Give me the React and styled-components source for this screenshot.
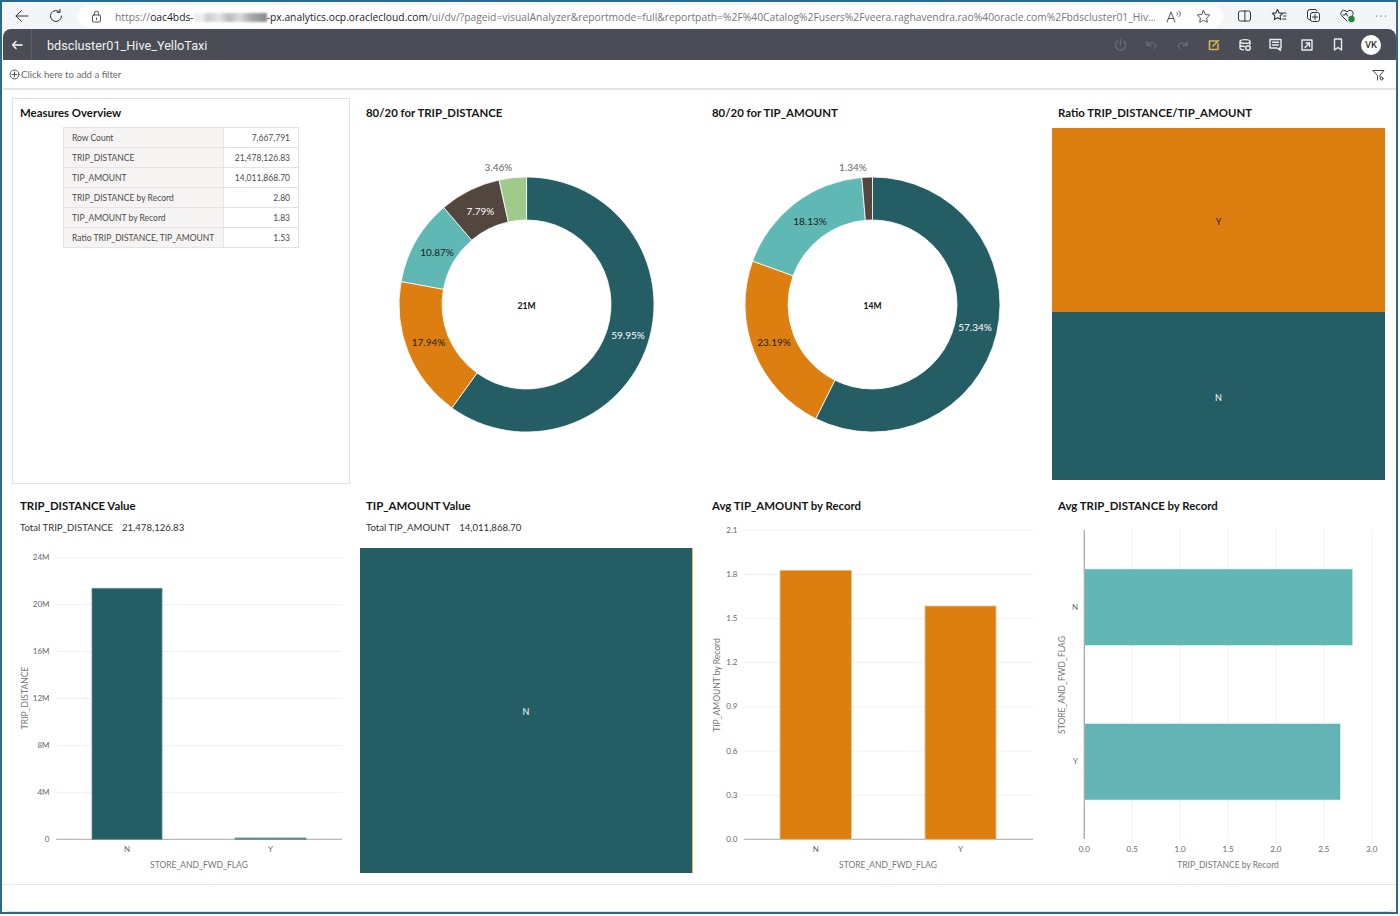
import React from "react";
import styled, { createGlobalStyle } from "styled-components";

const Global = createGlobalStyle`
  html, body { margin: 0; padding: 0; background: #fff; }
  body { font-family: "Lato", "Noto Sans", sans-serif; }
`;

const TEAL = "#255d64";
const ORANGE = "#dc7e10";
const AQUA = "#5fb8b3";
const BROWN = "#53463e";
const GREEN = "#a0c98c";

const Frame = styled.div`
  box-sizing: border-box;
  width: 1398px;
  height: 914px;
  border: 2px solid #2a6a8c;
  background: #fff;
  display: flex;
  flex-direction: column;
  overflow: hidden;
`;

const BrowserBar = styled.div`
  height: 27px;
  flex: none;
  background: #f3f5f8;
  display: flex;
  align-items: center;
`;
const NavSlot = styled.div`
  width: ${(p) => p.$w}px;
  flex: none;
  display: flex;
  justify-content: center;
  align-items: center;
`;
const UrlPill = styled.div`
  width: 1145px;
  height: 23px;
  margin-top: 2px;
  margin-left: 8px;
  background: #fff;
  border-radius: 12px;
  display: flex;
  align-items: center;
  flex: none;
  color: #777;
  font-family: "Open Sans", sans-serif;
  font-size: 10.3px;
  white-space: nowrap;
`;
const UrlLock = styled.div`
  width: 37px;
  flex: none;
  display: flex;
  justify-content: center;
`;
const UrlText = styled.div`
  width: 1040px;
  flex: none;
  overflow: hidden;
`;
const Host = styled.span`
  color: #222;
`;
const Blurred = styled.span`
  display: inline-block;
  width: 73px;
  height: 9px;
  vertical-align: -1px;
  background: linear-gradient(90deg, #eee 0 12%, #ccc 18%, #e6e6e6 34%, #bbb 48%, #ddd 62%, #aaa 78%, #888 100%);
  filter: blur(1px);
`;
const PillIcons = styled.div`
  display: flex;
  align-items: center;
  gap: 14px;
  margin-left: 11px;
`;
const BrowserTools = styled.div`
  display: flex;
  align-items: center;
  margin-left: 4px;
`;

const AppHeader = styled.div`
  height: 31px;
  flex: none;
  background: #4a4d55;
  border-radius: 8px 8px 0 0;
  margin-left: 1px;
  display: flex;
  align-items: center;
  color: #fff;
`;
const BackCell = styled.div`
  width: 28px;
  height: 100%;
  flex: none;
  border-right: 1px solid #5d6067;
  display: flex;
  align-items: center;
  justify-content: center;
`;
const DocTitle = styled.div`
  font-family: "Roboto", sans-serif;
  font-size: 12.7px;
  color: #f1f1f1;
  margin-left: 15px;
  padding-top: 1px;
  flex: 1;
`;
const HeaderIcons = styled.div`
  display: flex;
  align-items: center;
  margin-right: 15px;
`;
const HeaderIcon = styled.div`
  width: 31px;
  display: flex;
  justify-content: center;
  align-items: center;
`;
const Avatar = styled.div`
  width: 20px;
  height: 20px;
  border-radius: 50%;
  background: #fff;
  color: #33363c;
  font-family: "Roboto", sans-serif;
  font-size: 9.5px;
  font-weight: 500;
  display: flex;
  align-items: center;
  justify-content: center;
  margin-left: 8px;
`;

const FilterBar = styled.div`
  box-sizing: border-box;
  height: 30px;
  flex: none;
  margin-left: 1px;
  border-bottom: 2px solid #e4e4e4;
  display: flex;
  align-items: center;
  padding: 1px 11px 0 6px;
  font-size: 9.6px;
  color: #6a6a6a;
`;
const FilterText = styled.span`
  flex: 1;
  margin-left: 1px;
`;

const Canvas = styled.div`
  display: grid;
  grid-template-columns: repeat(4, 346px);
  grid-template-rows: repeat(2, 393px);
  padding: 2px 0 0 6px;
  flex: none;
`;
const Cell = styled.section`
  box-sizing: border-box;
  padding: 14px 7px 5px 6px;
  display: flex;
  flex-direction: column;
`;
const FramedCell = styled.section`
  box-sizing: border-box;
  margin: 6px 4px 1px 4px;
  border: 1px solid #e2e2e2;
  padding: 7px 0 0 1px;
  display: flex;
  flex-direction: column;
`;
const Title = styled.h2`
  margin: 0 0 8px;
  padding-left: 6px;
  font-size: 11.4px;
  line-height: 14px;
  font-weight: 700;
  color: #161616;
`;
const Sub = styled.div`
  padding-left: 6px;
  margin-bottom: 13px;
  font-size: 9.6px;
  line-height: 14px;
  color: #333;
  display: flex;
  gap: 9px;
`;
const Table = styled.table`
  border-collapse: collapse;
  width: 236px;
  margin: -1px 0 0 49px;
  table-layout: fixed;
  font-size: 8.5px;
  color: #4c4c4c;
  & td {
    height: 20px;
    padding: 0;
    box-sizing: border-box;
    border: 1px solid #e4e3e1;
  }
`;
const Label = styled.td`
  width: 160px;
  background: #f5f4f2;
  padding-left: 8px !important;
`;
const Val = styled.td`
  text-align: right;
  padding-right: 8px !important;
`;

const Tree = styled.div`
  flex: 1;
  display: flex;
  flex-direction: ${(p) => (p.$row ? "row" : "column")};
  width: 333px;
`;
const Tile = styled.div`
  box-sizing: border-box;
  flex: ${(p) => (p.$size ? `0 0 ${p.$size}px` : "1")};
  background: ${(p) => p.$bg};
  color: ${(p) => p.$fg || "#fff"};
  font-size: 9px;
  padding-top: ${(p) => (p.$size === 1 ? 0 : 2)}px;
  display: flex;
  align-items: center;
  justify-content: center;
`;
const Footer = styled.div`
  box-sizing: border-box;
  margin-top: 6px;
  flex: 1;
  border-top: 1px solid #e8e8e8;
  border-bottom: 1px solid #dedede;
  border-radius: 0 0 8px 8px;
`;

const ChartSvg = styled.svg`
  display: block;
  flex: none;
`;
const Tick = styled.text`
  font-family: "Lato", sans-serif;
  font-size: 8px;
  fill: #666;
`;
const AxisTitle = styled.text`
  font-family: "Lato", sans-serif;
  font-size: 8.5px;
  fill: #777;
`;
const Pct = styled.text`
  font-family: "Lato", sans-serif;
  font-size: 10px;
  text-anchor: middle;
`;
const Center = styled.text`
  font-family: "Lato", sans-serif;
  font-size: 8.5px;
  font-weight: 700;
  text-anchor: middle;
  fill: #111;
`;

function polar(cx, cy, r, f) {
  const a = f * 2 * Math.PI;
  return [cx + r * Math.sin(a), cy - r * Math.cos(a)];
}
function arc(cx, cy, R, r, a, b) {
  const large = b - a > 0.5 ? 1 : 0;
  const [x1, y1] = polar(cx, cy, R, a);
  const [x2, y2] = polar(cx, cy, R, b);
  const [x3, y3] = polar(cx, cy, r, b);
  const [x4, y4] = polar(cx, cy, r, a);
  return `M${x1} ${y1}A${R} ${R} 0 ${large} 1 ${x2} ${y2}L${x3} ${y3}A${r} ${r} 0 ${large} 0 ${x4} ${y4}Z`;
}

function Donut({ originX, total, slices }) {
  const cx = originX + 166.5;
  const cy = 304.5;
  let acc = 0;
  return (
    <ChartSvg width="333" height="352" viewBox={`${originX} 128 333 352`}>
      {slices.map((s) => {
        const a = acc;
        acc += s.v / 100;
        return <path key={s.label} d={arc(cx, cy, 127.5, 84.5, a, acc)} fill={s.c} stroke="#fff" strokeWidth="0.8" />;
      })}
      {slices.map((s) => (
        <Pct key={s.label} x={s.x} y={s.y + 3.5} fill={s.t}>
          {s.label}
        </Pct>
      ))}
      <Center x={cx} y={cy + 4}>
        {total}
      </Center>
    </ChartSvg>
  );
}

function VBars({ view, x0, x1, top, bottom, ticks, labelX, bars, xTitle, xTitleX, yTitle, yTitleX, yTitleY }) {
  const [vx, vy, w, h] = view;
  const step = (bottom - top) / (ticks.length - 1);
  return (
    <ChartSvg width={w} height={h} viewBox={view.join(" ")}>
      {ticks.map((t, i) => {
        const y = bottom - i * step;
        return (
          <g key={t}>
            <line x1={x0} x2={x1} y1={y} y2={y} stroke={i === 0 ? "#a8a8a8" : "#eef0f2"} strokeWidth="1" />
            <Tick x={labelX} y={y + 2.5} textAnchor="end">
              {t}
            </Tick>
          </g>
        );
      })}
      {bars.map((b) => (
        <g key={b.n}>
          <rect x={b.x} y={b.top} width={b.w} height={bottom - b.top} fill={b.c} stroke={b.s} strokeWidth="0.8" />
          <Tick x={b.x + b.w / 2} y={852} textAnchor="middle">
            {b.n}
          </Tick>
        </g>
      ))}
      <AxisTitle x={xTitleX} y={868} textAnchor="middle">
        {xTitle}
      </AxisTitle>
      <AxisTitle x={yTitleX} y={yTitleY} textAnchor="middle" transform={`rotate(-90 ${yTitleX} ${yTitleY})`}>
        {yTitle}
      </AxisTitle>
    </ChartSvg>
  );
}

function HBars() {
  const xs = ["0.0", "0.5", "1.0", "1.5", "2.0", "2.5", "3.0"];
  return (
    <ChartSvg width="333" height="352" viewBox="1052 521 333 352">
      {xs.map((t, i) => {
        const x = 1084.3 + i * 47.9;
        return (
          <g key={t}>
            <line x1={x} x2={x} y1="530" y2="839" stroke={i === 0 ? "#a8a8a8" : "#eef0f2"} />
            <Tick x={x} y={852} textAnchor="middle">
              {t}
            </Tick>
          </g>
        );
      })}
      <rect x="1084.3" y="569" width="268.4" height="76.3" fill="#62b6b4" stroke="#d8efee" strokeWidth="0.6" />
      <rect x="1084.3" y="723.7" width="256" height="76.3" fill="#65b4b5" stroke="#d8efee" strokeWidth="0.6" />
      <line x1="1084.3" x2="1084.3" y1="530" y2="839" stroke="#a8a8a8" />
      <Tick x="1078" y="610" textAnchor="end">N</Tick>
      <Tick x="1078" y="764" textAnchor="end">Y</Tick>
      <AxisTitle x="1228" y="868" textAnchor="middle">TRIP_DISTANCE by Record</AxisTitle>
      <AxisTitle x="1065" y="685" textAnchor="middle" transform="rotate(-90 1065 685)">STORE_AND_FWD_FLAG</AxisTitle>
    </ChartSvg>
  );
}

const Ic = ({ w = 16, h = 16, children, stroke = "#333", sw = 1 }) => (
  <svg width={w} height={h} viewBox={`0 0 ${w} ${h}`} fill="none" stroke={stroke} strokeWidth={sw} strokeLinecap="round" strokeLinejoin="round">
    {children}
  </svg>
);

const rows = [
  ["Row Count", "7,667,791"],
  ["TRIP_DISTANCE", "21,478,126.83"],
  ["TIP_AMOUNT", "14,011,868.70"],
  ["TRIP_DISTANCE by Record", "2.80"],
  ["TIP_AMOUNT by Record", "1.83"],
  ["Ratio TRIP_DISTANCE, TIP_AMOUNT", "1.53"],
];

const d1 = [
  { v: 59.95, c: TEAL, label: "59.95%", x: 628, y: 335, t: "#fff" },
  { v: 17.94, c: ORANGE, label: "17.94%", x: 428.5, y: 342, t: "#1c1c1c" },
  { v: 10.87, c: AQUA, label: "10.87%", x: 437, y: 252, t: "#1c1c1c" },
  { v: 7.79, c: BROWN, label: "7.79%", x: 480.5, y: 211, t: "#fff" },
  { v: 3.46, c: GREEN, label: "3.46%", x: 498.5, y: 167, t: "#666" },
];
const d2 = [
  { v: 57.34, c: TEAL, label: "57.34%", x: 975, y: 327, t: "#fff" },
  { v: 23.19, c: ORANGE, label: "23.19%", x: 774, y: 342, t: "#1c1c1c" },
  { v: 18.13, c: AQUA, label: "18.13%", x: 810, y: 221, t: "#1c1c1c" },
  { v: 1.34, c: BROWN, label: "1.34%", x: 853, y: 167, t: "#666" },
];

const DIM = "#666970";
const LIGHT = "#eceded";

export default function App() {
  return (
    <>
      <Global />
      <Frame>
        <BrowserBar>
          <NavSlot $w={40}>
            <Ic w={16} h={14}>
              <path d="M14 7H2M7.500 1.500 2 7l5.500 5.500" />
            </Ic>
          </NavSlot>
          <NavSlot $w={28}>
            <Ic w={16} h={16}>
              <path d="M13.500 8a5.500 5.500 0 1 1-1.700-4M12 1.300V4.300H9" />
            </Ic>
          </NavSlot>
          <UrlPill>
            <UrlLock>
              <Ic w={11} h={13} stroke="#555">
                <rect x="1.500" y="5" width="8" height="7" rx="1" />
                <path d="M3.500 5V3.200a2 2 0 0 1 4 0V5M5.500 8v1.500" />
              </Ic>
            </UrlLock>
            <UrlText>
              https://<Host>oac4bds-<Blurred />-px.analytics.ocp.oraclecloud.com</Host>/ui/dv/?pageid=visualAnalyzer&amp;reportmode=full&amp;reportpath=%2F%40Catalog%2Fusers%2Fveera.raghavendra.rao%40oracle.com%2Fbdscluster01_Hiv...
            </UrlText>
            <PillIcons>
              <Ic w={16} h={14} stroke="#555">
                <path d="M1 12 5 2l4 10M2.500 8.500h5M11 2.500c1 .8 1 2 0 2.800M13 1c1.800 1.500 1.800 4 0 5.600" />
              </Ic>
              <Ic w={15} h={15} stroke="#555">
                <path d="m7.500 1.500 1.900 3.900 4.300.6-3.100 3 .7 4.300-3.800-2-3.800 2 .7-4.300-3.100-3 4.300-.6z" />
              </Ic>
            </PillIcons>
          </UrlPill>
          <BrowserTools>
            <NavSlot $w={34}>
              <Ic w={15} h={14}>
                <path d="M7.500 2H3.500a2 2 0 0 0-2 2v6a2 2 0 0 0 2 2h4zM7.500 2h4a2 2 0 0 1 2 2v6a2 2 0 0 1-2 2h-4" />
              </Ic>
            </NavSlot>
            <NavSlot $w={35}>
              <Ic w={16} h={15} sw={1.1}>
                <path d="m6.500 1.500 1.600 3.400 3.600.5-2.600 2.500.6 3.700-3.200-1.800-3.200 1.800.6-3.700L1.300 5.400l3.600-.5zM12 5h3M12.500 8H15M11.500 11H15" />
              </Ic>
            </NavSlot>
            <NavSlot $w={34}>
              <Ic w={15} h={15}>
                <rect x="4.500" y="4.500" width="9" height="9" rx="2" />
                <path d="M9 6.500v5M6.500 9h5M4 11.500H3a2 2 0 0 1-1.500-2V4a2.500 2.500 0 0 1 2.500-2.500h5A2 2 0 0 1 11 3" />
              </Ic>
            </NavSlot>
            <NavSlot $w={34}>
              <Ic w={17} h={15}>
                <path d="M8 13 2.500 7.500a3.200 3.200 0 0 1 4.500-4.500l1 1 1-1a3.200 3.200 0 0 1 4.500 4.500M4 7h2l1-2 1.500 3" />
                <circle cx="12.500" cy="11" r="3.200" fill="#1f8a3b" stroke="none" />
              </Ic>
            </NavSlot>
            <NavSlot $w={33}>
              <Ic w={12} h={4} sw={1.2}>
                <path d="M1.500 2h.01M6 2h.01M10.500 2h.01" />
              </Ic>
            </NavSlot>
          </BrowserTools>
        </BrowserBar>

        <AppHeader>
          <BackCell>
            <Ic w={12} h={10} stroke="#fff" sw={1.4}>
              <path d="M11 5H1.500M5 1.500 1.500 5 5 8.500" />
            </Ic>
          </BackCell>
          <DocTitle>bdscluster01_Hive_YelloTaxi</DocTitle>
          <HeaderIcons>
            <HeaderIcon>
              <Ic w={13} h={14} stroke={DIM} sw={1.5}>
                <path d="M6.500 1.500V7M3.500 3.200a5 5 0 1 0 6 0" />
              </Ic>
            </HeaderIcon>
            <HeaderIcon>
              <Ic w={13} h={11} stroke={DIM} sw={1.5}>
                <path d="M2 2.500v4h4M2 6.500C4 3.500 8 2.500 11 6.500l-1.500 3" />
              </Ic>
            </HeaderIcon>
            <HeaderIcon>
              <Ic w={13} h={11} stroke={DIM} sw={1.5}>
                <path d="M11 2.500v4H7M11 6.500C9 3.500 5 2.500 2 6.500l1.500 3" />
              </Ic>
            </HeaderIcon>
            <HeaderIcon>
              <Ic w={12} h={12} stroke="#d9b152" sw={1.6}>
                <path d="M8.500 2H1.500v8.500H10V5M5 7l5.500-5.500" />
              </Ic>
            </HeaderIcon>
            <HeaderIcon>
              <Ic w={14} h={14} stroke={LIGHT} sw={1.4}>
                <path d="M2 3.500C2 1 12 1 12 3.500S2 6 2 3.500ZM2 3.500V10c0 1 1.500 1.700 3.500 1.900M12 3.500V6.500M2 7.200c1 1 2.500 1.300 4.500 1.300" />
                <circle cx="10" cy="10" r="2.300" />
              </Ic>
            </HeaderIcon>
            <HeaderIcon>
              <Ic w={13} h={14} stroke={LIGHT} sw={1.4}>
                <path d="M1 1.500h11v8.500h-1.500l1 2.500-3.500-2.500H1zM3.500 4.200h6M3.500 7h6" />
              </Ic>
            </HeaderIcon>
            <HeaderIcon>
              <Ic w={12} h={12} stroke={LIGHT} sw={1.4}>
                <path d="M1 1h10v10H1zM4 8.500 8.500 4M5 4h3.500v3.500" />
              </Ic>
            </HeaderIcon>
            <HeaderIcon>
              <Ic w={10} h={13} stroke={LIGHT} sw={1.4}>
                <path d="M1.500 1h7v11L5 9.500 1.500 12z" />
              </Ic>
            </HeaderIcon>
            <Avatar>VK</Avatar>
          </HeaderIcons>
        </AppHeader>

        <FilterBar>
          <Ic w={11} h={11} stroke="#555">
            <circle cx="5.500" cy="5.500" r="4.500" />
            <path d="M5.500 3v5M3 5.500h5" />
          </Ic>
          <FilterText>Click here to add a filter</FilterText>
          <Ic w={13} h={12} stroke="#444">
            <path d="M1 1.500h11L8 6v2M1 1.500 5.500 6.500V11" />
            <circle cx="9.500" cy="9.500" r="1.500" />
          </Ic>
        </FilterBar>

        <Canvas>
          <FramedCell>
            <Title>Measures Overview</Title>
            <Table>
              <tbody>
                {rows.map(([a, b]) => (
                  <tr key={a}>
                    <Label>{a}</Label>
                    <Val>{b}</Val>
                  </tr>
                ))}
              </tbody>
            </Table>
          </FramedCell>
          <Cell>
            <Title>80/20 for TRIP_DISTANCE</Title>
            <Donut originX={360} total="21M" slices={d1} />
          </Cell>
          <Cell>
            <Title>80/20 for TIP_AMOUNT</Title>
            <Donut originX={706} total="14M" slices={d2} />
          </Cell>
          <Cell>
            <Title>Ratio TRIP_DISTANCE/TIP_AMOUNT</Title>
            <Tree>
              <Tile $bg={ORANGE} $fg="#222" $size={184}>Y</Tile>
              <Tile $bg={TEAL}>N</Tile>
            </Tree>
          </Cell>
          <Cell>
            <Title>TRIP_DISTANCE Value</Title>
            <Sub>
              <span>Total TRIP_DISTANCE</span>
              <span>21,478,126.83</span>
            </Sub>
            <VBars
              view={[14, 548, 333, 325]}
              x0={56}
              x1={342}
              top={557.7}
              bottom={839.3}
              ticks={["0", "4M", "8M", "12M", "16M", "20M", "24M"]}
              labelX={49.5}
              bars={[
                { n: "N", x: 92, w: 70, top: 588.3, c: TEAL, s: "#5c8f93" },
                { n: "Y", x: 235, w: 71, top: 838, c: "#5f8a8f", s: "#5f8a8f" },
              ]}
              xTitle="STORE_AND_FWD_FLAG"
              xTitleX={199}
              yTitle="TRIP_DISTANCE"
              yTitleX={28}
              yTitleY={698}
            />
          </Cell>
          <Cell>
            <Title>TIP_AMOUNT Value</Title>
            <Sub>
              <span>Total TIP_AMOUNT</span>
              <span>14,011,868.70</span>
            </Sub>
            <Tree $row>
              <Tile $bg={TEAL}>N</Tile>
              <Tile $bg="#e8b060" $size={1} />
            </Tree>
          </Cell>
          <Cell>
            <Title>Avg TIP_AMOUNT by Record</Title>
            <VBars
              view={[706, 521, 333, 352]}
              x0={743.7}
              x1={1033}
              top={530.3}
              bottom={839.3}
              ticks={["0.0", "0.3", "0.6", "0.9", "1.2", "1.5", "1.8", "2.1"]}
              labelX={737.5}
              bars={[
                { n: "N", x: 780, w: 71.5, top: 570.3, c: ORANGE, s: "#f2c488" },
                { n: "Y", x: 925, w: 71, top: 606, c: ORANGE, s: "#f2c488" },
              ]}
              xTitle="STORE_AND_FWD_FLAG"
              xTitleX={888}
              yTitle="TIP_AMOUNT by Record"
              yTitleX={720}
              yTitleY={685}
            />
          </Cell>
          <Cell>
            <Title>Avg TRIP_DISTANCE by Record</Title>
            <HBars />
          </Cell>
        </Canvas>
        <Footer />
      </Frame>
    </>
  );
}
